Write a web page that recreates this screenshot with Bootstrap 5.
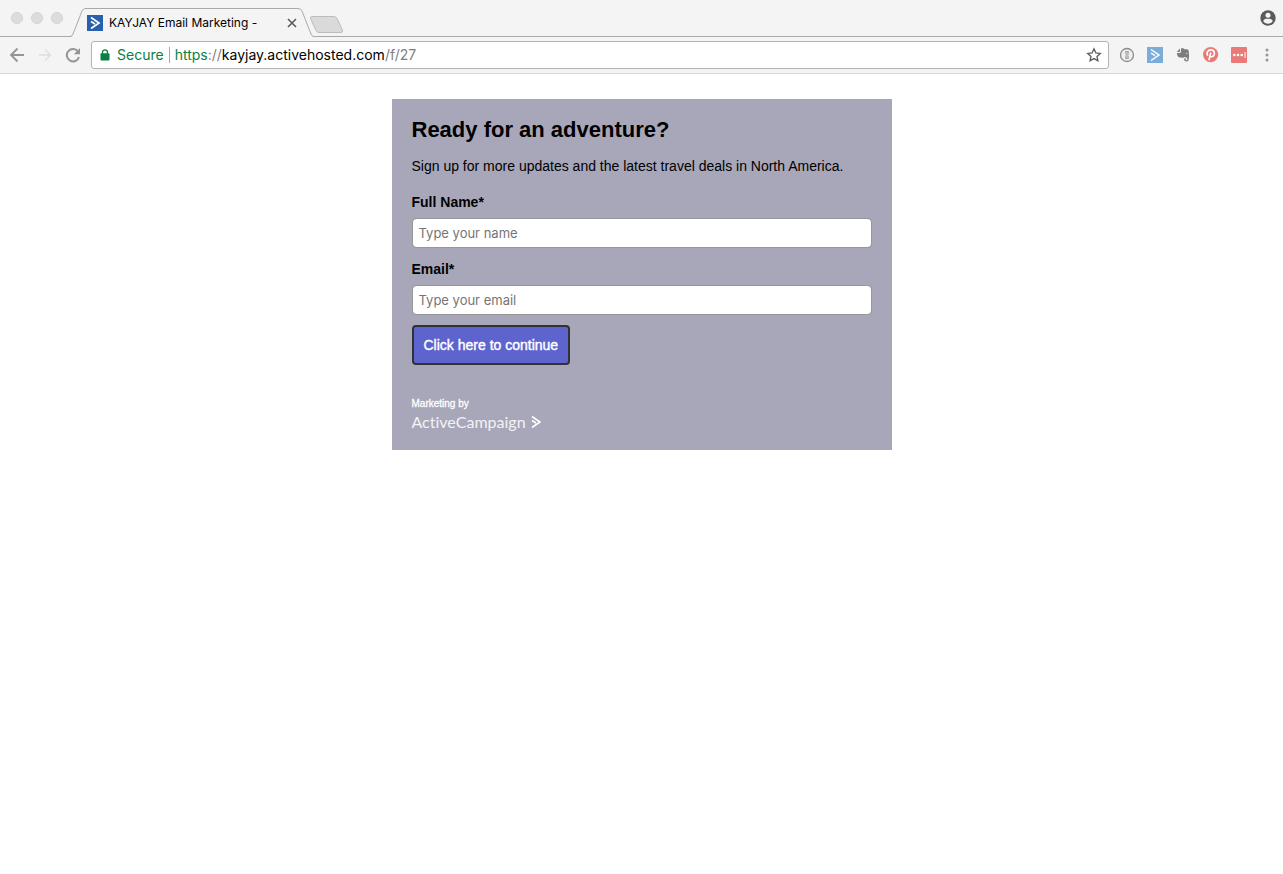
<!DOCTYPE html>
<html lang="en">
<head>
<meta charset="utf-8">
<meta name="viewport" content="width=device-width, initial-scale=1">
<title>KAYJAY Email Marketing</title>
<link href="https://cdn.jsdelivr.net/npm/bootstrap@5.3.0/dist/css/bootstrap.min.css" rel="stylesheet">
<style>
  body { font-family: "Liberation Sans", Arial, sans-serif; color: #000; background: #fff; }
  svg { display: block; flex: none; }
  .chrome-ui { font-family: Inter, Roboto, sans-serif; background: #f4f4f4; }
  .tab-strip { height: 37px; border-bottom: 1px solid #a9a9a9; padding-left: 11px; padding-right: 7px; }
  .light { width: 12px; height: 12px; border-radius: 50%; background: #dcdcdc; border: 1px solid #d3d3d3; }
  .browser-tab { width: 244px; height: 29px; margin-left: 7px; padding: 0 17px; font-size: 12px; line-height: 16px; margin-bottom: -1px; gap: 6px; }
  .tab-shape { position: absolute; inset: 0; z-index: 0; }
  .tab-item { position: relative; }
  .icon-btn { border: 0; background: none; padding: 0; flex: none; }
  .new-tab { margin: 12px 0 0 -4px; }
  .toolbar { height: 37px; border-bottom: 1px solid #d6d6d6; padding: 0 8px 0 9px; }
  .omnibox { height: 28px; border: 1px solid #b3b3b3; border-radius: 3px; background: #fff; font-size: 14px; line-height: 18px; padding: 0 6px 0 8px; margin: 0 10px; }
  .lock { margin-right: 7px; }
  .secure { color: #0b8043; }
  .muted { color: #808080; }
  .divider { width: 1px; height: 16px; background: #a8a8a8; margin: 0 5px; }
  .signup { max-width: 500px; background: #a8a7b9; margin: 25px auto 0; padding: 17px 20px; font-size: 14px; line-height: 20px; }
  .signup h1 { font-size: 22px; line-height: 28px; font-weight: 700; margin-bottom: 12px; }
  .signup p { margin-bottom: 16px; }
  .signup label { display: block; font-weight: 700; margin-bottom: 6px; }
  .signup .form-control { height: 30px; border: 1px solid #979797; border-radius: 4px; padding: 4px 6px; font: 13px/20px Inter, Roboto, sans-serif; margin-bottom: 11px; }
  .signup .form-control::placeholder { color: #757575; opacity: 1; }
  .signup .btn { height: 40px; border: 2px solid #323232; border-radius: 4px; background: #5d64cd; color: #fff; font-size: 14px; line-height: 20px; padding: 8px 10px; margin-top: -1px; -webkit-text-stroke: 0.4px #fff; }
  .credit { color: #fff; font-size: 10px; line-height: 14px; margin-top: 32px; -webkit-text-stroke: 0.3px #fff; }
  .brand-link { color: #f2f2f7; font-family: Lato, sans-serif; font-variant-ligatures: none; font-size: 16px; line-height: 22px; gap: 5px; text-decoration: none; }
</style>
</head>
<body>
<header class="chrome-ui">
  <div class="tab-strip d-flex align-items-end">
    <div class="d-flex gap-2 align-self-center">
      <span class="light"></span><span class="light"></span><span class="light"></span>
    </div>
    <div class="browser-tab position-relative d-flex align-items-center">
      <svg class="tab-shape" width="244" height="29" viewBox="0 0 244 29"><path d="M0 29Q3 28.500 4 26L12 3Q13 .5 16 .5H228Q231 .5 232 3L241 26Q242 28.500 244 29Z" fill="#f4f4f4"/><path d="M0 28.500Q2 28.500 3 26L12 3Q13 .5 16 .5H228Q231 .5 232 3L241 26Q242 28.500 244 28.500" fill="none" stroke="#a9a9a9"/></svg>
      <svg class="tab-item" width="16" height="16" viewBox="0 0 16 16"><path fill="#2660ae" d="M0 0h16v16H0z"/><path d="M4 2.500L12 8L4 13.500M4 6.500L8 9" fill="none" stroke="#fff" stroke-width="1.700"/></svg>
      <span class="tab-item text-nowrap">KAYJAY Email Marketing -</span>
      <button class="icon-btn tab-item ms-auto" type="button" aria-label="Close tab"><svg width="10" height="10" viewBox="0 0 10 10"><path d="M1 1l8 8M9 1l-8 8" stroke="#5a5a5a" stroke-width="1.600"/></svg></button>
    </div>
    <button class="icon-btn new-tab align-self-center" type="button" aria-label="New tab"><svg width="34" height="17" viewBox="0 0 34 17"><path d="M2 .5H24Q26 .5 27 2.500L32.500 14Q33 16.500 31 16.500H9Q7 16.500 6 14.500L.5 2.500Q0 .5 2 .5Z" fill="#dadada" stroke="#bcbcbc"/></svg></button>
    <button class="icon-btn ms-auto align-self-center" type="button" aria-label="Profile"><svg width="16" height="16" viewBox="0 0 16 16"><circle cx="8" cy="8" r="7.700" fill="#5a5a5a"/><circle cx="8" cy="5.200" r="2.500" fill="#f4f4f4"/><path d="M3.200 11C4 9 6 8.800 8 8.800S12 9 12.800 11C11.800 12.800 10 13.700 8 13.700S4.200 12.800 3.200 11Z" fill="#f4f4f4"/></svg></button>
  </div>
  <div class="toolbar d-flex align-items-center">
    <div class="d-flex gap-2">
      <button class="icon-btn me-1" type="button" aria-label="Back"><svg width="16" height="16" viewBox="0 0 16 16"><path d="M15 8H2.500M8.500 1.500L2 8L8.500 14.500" fill="none" stroke="#959595" stroke-width="1.800"/></svg></button>
      <button class="icon-btn me-1" type="button" aria-label="Forward"><svg width="16" height="16" viewBox="0 0 16 16"><path d="M2 8H13M8 2.500L13.500 8L8 13.500" fill="none" stroke="#dedede" stroke-width="1.400"/></svg></button>
      <button class="icon-btn" type="button" aria-label="Reload"><svg width="16" height="16" viewBox="0 0 16 16"><path d="M13 4.500A6.200 6.200 0 1 0 14 10" fill="none" stroke="#959595" stroke-width="2"/><path d="M15 1V7.200H8.800Z" fill="#959595"/></svg></button>
    </div>
    <div class="omnibox d-flex align-items-center flex-grow-1">
      <svg class="lock" width="10" height="12" viewBox="0 0 10 12"><path d="M2.500 5V3.300a2.500 2.500 0 0 1 5 0V5" fill="none" stroke="#0b8043" stroke-width="1.300"/><rect x=".5" y="4.300" width="9" height="7.200" rx="1" fill="#0b8043"/></svg>
      <span class="secure">Secure</span><span class="divider"></span>
      <div class="flex-grow-1 text-nowrap" role="textbox" aria-label="Address" contenteditable="true" spellcheck="false"><span class="secure">https</span><span class="muted">://</span>kayjay.activehosted.com<span class="muted">/f/27</span></div>
      <button class="icon-btn" type="button" aria-label="Bookmark"><svg width="16" height="16" viewBox="0 0 16 16"><path d="M8 1.800L9.900 5.900L14.300 6.400L11 9.400L11.900 13.800L8 11.600L4.100 13.800L5 9.400L1.700 6.400L6.100 5.900Z" fill="none" stroke="#5a5a5a" stroke-width="1.300"/></svg></button>
    </div>
    <div class="d-flex align-items-center gap-2">
      <button class="icon-btn me-1" type="button" aria-label="Password manager"><svg width="16" height="16" viewBox="0 0 16 16"><circle cx="8" cy="8" r="6.500" fill="#eee" stroke="#8c8c8c" stroke-width="1.300"/><path d="M6.300 4H9.700V7L9 8L9.700 9V12H6.300V9L7 8L6.300 7Z" fill="#a2a2a2"/><path d="M8 5v6" stroke="#e4e4e4" stroke-width=".8"/></svg></button>
      <button class="icon-btn me-1" type="button" aria-label="ActiveCampaign"><svg width="16" height="16" viewBox="0 0 16 16"><path fill="#7cacd9" d="M0 0h16v16H0z"/><path d="M4 2.500L12 8L4 13.500M4 6L8 8.700" fill="none" stroke="#fff" stroke-width="1.500"/></svg></button>
      <button class="icon-btn me-1" type="button" aria-label="Evernote"><svg width="16" height="16" viewBox="0 0 16 16"><path d="M5 1.500V4Q5 5 4 5H1.700Z" fill="#7c7c7c"/><path d="M6 1.300H8.300L9.500 2.300H12Q13.500 2.500 13.700 4Q14.500 9 13.600 13Q13 14.700 11 14.500Q8.800 14.300 9 12.300Q9.300 11 11 11.200V12.500H10.300V13.300H11.800Q12.500 13 12.300 11.500Q12 10 9.500 10Q9 11 7.500 10.800Q5.500 10.500 3.800 10.200Q2.300 9.500 1.800 6H4.500Q6 6 6 4.500Z" fill="#7c7c7c"/><path d="M10.800 6.500Q12 5.700 12.300 7.200" fill="none" stroke="#eee" stroke-width=".8"/></svg></button>
      <button class="icon-btn me-1" type="button" aria-label="Pinterest"><svg width="16" height="16" viewBox="0 0 16 16"><circle cx="7.600" cy="7.600" r="7.600" fill="#e87b78"/><path d="M4.900 8.700Q3.300 6.700 4.500 4.700Q6 2.600 8.500 2.900Q11.500 3.400 11.400 6.400Q11 9.700 8.500 9.800Q7.300 9.700 6.900 8.700M7.800 5.500L5.900 13.200" fill="none" stroke="#fff" stroke-width="1.600"/></svg></button>
      <button class="icon-btn me-1" type="button" aria-label="LastPass"><svg width="16" height="16" viewBox="0 0 16 16"><rect width="16" height="16" rx="1" fill="#e87b78"/><circle cx="3.300" cy="8" r="1.300" fill="#fff"/><circle cx="7" cy="8" r="1.300" fill="#fff"/><circle cx="10.700" cy="8" r="1.300" fill="#fff"/><path d="M14 5v6" stroke="#fff"/></svg></button>
      <button class="icon-btn" type="button" aria-label="Menu"><svg width="16" height="16" viewBox="0 0 16 16"><g fill="#959595"><circle cx="8" cy="3" r="1.500"/><circle cx="8" cy="8" r="1.500"/><circle cx="8" cy="13" r="1.500"/></g></svg></button>
    </div>
  </div>
</header>
<main>
  <form class="signup">
    <h1>Ready for an adventure?</h1>
    <p>Sign up for more updates and the latest travel deals in North America.</p>
    <label for="fullname">Full Name*</label>
    <input class="form-control" id="fullname" type="text" placeholder="Type your name">
    <label for="email">Email*</label>
    <input class="form-control" id="email" type="email" placeholder="Type your email">
    <button class="btn" type="submit">Click here to continue</button>
    <div class="credit">Marketing by</div>
    <a class="brand-link d-flex align-items-center" href="#"><span>ActiveCampaign</span><svg width="10" height="14" viewBox="0 0 10 14"><path d="M1 1.500L9 7L1 12.500M1 5.500L5 8" fill="none" stroke="#fff" stroke-width="1.600"/></svg></a>
  </form>
</main>
<script src="https://cdn.jsdelivr.net/npm/bootstrap@5.3.0/dist/js/bootstrap.bundle.min.js"></script>
</body>
</html>
